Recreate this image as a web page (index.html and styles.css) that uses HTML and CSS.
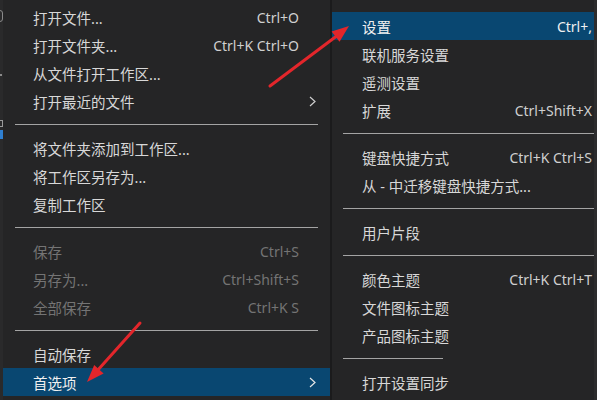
FILE: index.html
```html
<!DOCTYPE html>
<html lang="zh-CN">
<head>
<meta charset="utf-8">
<title>首选项菜单</title>
<link rel="stylesheet" href="styles.css">
</head>
<body>
<div class="screen">
  <div class="activity">
    <span class="ab ab-round"></span>
    <span class="ab ab-dot"></span>
    <span class="ab ab-square"></span>
    <span class="ab ab-blue"></span>
  </div>

  <div class="menu menu-left">
    <div class="item"><span class="label">打开文件...</span><span class="key">Ctrl+O</span><span class="sub"></span></div>
    <div class="item"><span class="label">打开文件夹...</span><span class="key">Ctrl+K Ctrl+O</span><span class="sub"></span></div>
    <div class="item"><span class="label">从文件打开工作区...</span><span class="key"></span><span class="sub"></span></div>
    <div class="item"><span class="label">打开最近的文件</span><span class="key"></span><span class="sub"><svg class="chev" width="7" height="11" viewBox="0 0 7 11"><polyline points="1,1 6,5.5 1,10" fill="none" stroke="#cfcfcf" stroke-width="1.2"/></svg></span></div>
    <div class="sep"><span class="line"></span></div>
    <div class="item"><span class="label">将文件夹添加到工作区...</span><span class="key"></span><span class="sub"></span></div>
    <div class="item"><span class="label">将工作区另存为...</span><span class="key"></span><span class="sub"></span></div>
    <div class="item"><span class="label">复制工作区</span><span class="key"></span><span class="sub"></span></div>
    <div class="sep"><span class="line"></span></div>
    <div class="item disabled"><span class="label">保存</span><span class="key">Ctrl+S</span><span class="sub"></span></div>
    <div class="item disabled"><span class="label">另存为...</span><span class="key">Ctrl+Shift+S</span><span class="sub"></span></div>
    <div class="item disabled"><span class="label">全部保存</span><span class="key">Ctrl+K S</span><span class="sub"></span></div>
    <div class="sep"><span class="line"></span></div>
    <div class="item"><span class="label">自动保存</span><span class="key"></span><span class="sub"></span></div>
    <div class="item active"><span class="label">首选项</span><span class="key"></span><span class="sub"><svg class="chev" width="7" height="11" viewBox="0 0 7 11"><polyline points="1,1 6,5.5 1,10" fill="none" stroke="#e6e6e6" stroke-width="1.2"/></svg></span></div>
  </div>

  <div class="divider"></div>

  <div class="menu menu-right">
    <div class="item active"><span class="label">设置</span><span class="key">Ctrl+,</span></div>
    <div class="item"><span class="label">联机服务设置</span><span class="key"></span></div>
    <div class="item"><span class="label">遥测设置</span><span class="key"></span></div>
    <div class="item"><span class="label">扩展</span><span class="key">Ctrl+Shift+X</span></div>
    <div class="sep"><span class="line"></span></div>
    <div class="item"><span class="label">键盘快捷方式</span><span class="key">Ctrl+K Ctrl+S</span></div>
    <div class="item"><span class="label">从 - 中迁移键盘快捷方式...</span><span class="key"></span></div>
    <div class="sep"><span class="line"></span></div>
    <div class="item"><span class="label">用户片段</span><span class="key"></span></div>
    <div class="sep"><span class="line"></span></div>
    <div class="item"><span class="label">颜色主题</span><span class="key">Ctrl+K Ctrl+T</span></div>
    <div class="item"><span class="label">文件图标主题</span><span class="key"></span></div>
    <div class="item"><span class="label">产品图标主题</span><span class="key"></span></div>
    <div class="sep"><span class="line short"></span></div>
    <div class="item"><span class="label">打开设置同步</span><span class="key"></span></div>
  </div>

  <div class="edge"></div>

  <svg class="arrows" width="597" height="400" viewBox="0 0 597 400">
    <line x1="270" y1="86" x2="338" y2="35" stroke="#e3262b" stroke-width="3" stroke-linecap="round"/>
    <polygon points="349,26 339.5,41.8 331.6,31.4" fill="#e3262b"/>
    <line x1="140" y1="323" x2="97" y2="371" stroke="#e3262b" stroke-width="3" stroke-linecap="round"/>
    <polygon points="87,382 103.6,373.6 94.2,365.1" fill="#e3262b"/>
  </svg>
</div>
</body>
</html>
```

FILE: styles.css
```css
* { box-sizing: border-box; }

html, body {
  margin: 0;
  padding: 0;
  background: #1f1f1f;
}

.screen {
  position: relative;
  width: 597px;
  height: 400px;
  overflow: hidden;
  display: flex;
  background: #1f1f1f;
  font-family: "Noto Sans", "Noto Sans CJK SC", sans-serif;
  color: #d2d2d2;
}

.activity {
  width: 3px;
  flex: none;
  background: #2a2a2b;
  display: flex;
  flex-direction: column;
  overflow: hidden;
}

.ab {
  display: block;
  flex: none;
}
.ab-round {
  width: 6px;
  height: 12px;
  margin-top: 10px;
  margin-left: -3px;
  border: 1px solid #8a8a8a;
  border-radius: 3px;
}
.ab-dot {
  width: 2px;
  height: 2px;
  margin-top: 52px;
  background: #8a8a8a;
}
.ab-square {
  width: 5px;
  height: 7px;
  margin-top: 44px;
  margin-left: -2px;
  border: 1px solid #9a9a9a;
}
.ab-blue {
  width: 3px;
  height: 9px;
  margin-top: 3px;
  background: #2f7fd0;
}

.menu {
  flex: none;
  background: #252526;
  display: flex;
  flex-direction: column;
}

.menu-left {
  width: 327px;
  padding-top: 3px;
}

.menu-right {
  width: 262px;
  padding-top: 12px;
}

.divider {
  width: 2px;
  flex: none;
  background: #1b1b1c;
}

.edge {
  flex: 1;
  background: #2c2c2d;
}

.item {
  height: 28px;
  flex: none;
  display: grid;
  align-items: center;
  padding-left: 30px;
  font-size: 14.5px;
  white-space: nowrap;
}

.menu-left .item {
  grid-template-columns: 1fr auto 19px;
  padding-right: 12px;
}

.menu-right .item {
  grid-template-columns: 1fr auto;
  padding-right: 2px;
}

.label {
  color: #d8d8d8;
}

.key {
  font-size: 14px;
  color: #d0d0d0;
  text-align: right;
}

.sub {
  display: flex;
  justify-content: flex-end;
  align-items: center;
  padding-right: 2px;
}

.chev { display: block; }

.item.disabled .label,
.item.disabled .key {
  color: #747474;
}

.item.active {
  background: #094771;
}
.item.active .label,
.item.active .key {
  color: #f0f0f0;
}

.sep {
  height: 19px;
  flex: none;
  display: flex;
  align-items: center;
}

.menu-left .sep .line {
  flex: 1;
  margin: 0 12px;
}

.menu-right .sep .line {
  flex: 1;
  margin-left: 11px;
}

.line {
  display: block;
  height: 1px;
  background: #a4a4a4;
}

.menu-right .sep .line.short {
  flex: none;
  width: 100px;
}

.arrows {
  position: absolute;
  left: 0;
  top: 0;
  pointer-events: none;
}
```
